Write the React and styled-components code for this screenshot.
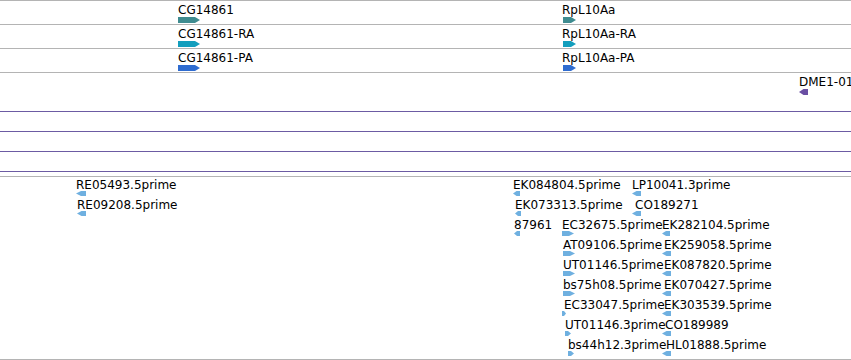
import React from 'react';
import styled, {createGlobalStyle} from 'styled-components';

const GlobalStyle = createGlobalStyle`
  html, body {
    margin: 0;
    padding: 0;
    background: #ffffff;
  }
  body {
    font-family: "DejaVu Sans", "Liberation Sans", sans-serif;
  }
`

const Browser = styled.div`
  width: 851px;
  height: 360px;
  overflow: hidden;
  display: flex;
  flex-direction: column;
  background: #fff;
  border-top: 1px solid #b4b4b4;
  box-sizing: border-box;
`

const Track = styled.div`
  position: relative;
  flex: none;
  height: ${p => p.h}px;
  border-bottom: 1px solid ${p => p.line || '#b4b4b4'};
`

const Feature = styled.div`
  position: absolute;
  left: ${p => p.x}px;
  top: ${p => p.y}px;
  display: flex;
  flex-direction: column;
  align-items: flex-start;
`

const Label = styled.span`
  font-size: 12px;
  line-height: 14px;
  color: #000;
  white-space: nowrap;
`

const Glyph = styled.svg`
  display: block;
  margin-top: ${p => p.gap || 0}px;
  margin-left: ${p => p.dx || 0}px;
`

const Arrow = ({w, h = 6, dir = 'right', color, gap, dx}) => {
  const tip = Math.min(5, w / 2)
  const pts = dir === 'right'
    ? `0,0 ${w - tip},0 ${w},${h / 2} ${w - tip},${h} 0,${h}`
    : `${w},0 ${tip},0 0,${h / 2} ${tip},${h} ${w},${h}`
  return (
    <Glyph width={w} height={h} gap={gap} dx={dx}>
      <polygon points={pts} fill={color} />
    </Glyph>
  )
}

const genes = [
  {row: 0, color: '#3f8c90'},
  {row: 1, color: '#139ebd', suffix: '-RA'},
  {row: 2, color: '#2f6cd0', suffix: '-PA'},
]

const EST = '#6fb0e0'

const ests = [
  {x: 76, r: 0, label: 'RE05493.5prime', w: 10, dir: 'left'},
  {x: 513, r: 0, label: 'EK084804.5prime', w: 7, dir: 'left'},
  {x: 632, r: 0, label: 'LP10041.3prime', w: 9, dir: 'left'},
  {x: 77, r: 1, label: 'RE09208.5prime', w: 9, dir: 'left'},
  {x: 515, r: 1, label: 'EK073313.5prime', w: 6, dir: 'left'},
  {x: 635, r: 1, label: 'CO189271', w: 9, dir: 'left', dx: -3},
  {x: 514, r: 2, label: '87961', w: 6, dir: 'left'},
  {x: 562, r: 2, label: 'EC32675.5prime', w: 12, dir: 'right'},
  {x: 662, r: 2, label: 'EK282104.5prime', w: 8, dir: 'left'},
  {x: 563, r: 3, label: 'AT09106.5prime', w: 12, dir: 'right'},
  {x: 664, r: 3, label: 'EK259058.5prime', w: 9, dir: 'left', dx: -2},
  {x: 563, r: 4, label: 'UT01146.5prime', w: 12, dir: 'right'},
  {x: 664, r: 4, label: 'EK087820.5prime', w: 9, dir: 'left', dx: -2},
  {x: 563, r: 5, label: 'bs75h08.5prime', w: 12, dir: 'right'},
  {x: 664, r: 5, label: 'EK070427.5prime', w: 9, dir: 'left', dx: -2},
  {x: 564, r: 6, label: 'EC33047.5prime', w: 4, dir: 'right', dx: -2},
  {x: 664, r: 6, label: 'EK303539.5prime', w: 9, dir: 'left', dx: -2},
  {x: 565, r: 7, label: 'UT01146.3prime', w: 6, dir: 'right'},
  {x: 665, r: 7, label: 'CO189989', w: 9, dir: 'left', dx: -3},
  {x: 568, r: 8, label: 'bs44h12.3prime', w: 6, dir: 'right'},
  {x: 666, r: 8, label: 'HL01888.5prime', w: 9, dir: 'left', dx: -4},
]

const App = () => {
  return (
    <>
      <GlobalStyle />
      <Browser>
        {genes.map(g => (
          <Track key={g.row} h={23}>
            <Feature x={178} y={2}>
              <Label>{'CG14861' + (g.suffix || '')}</Label>
              <Arrow w={22} color={g.color} gap={0} />
            </Feature>
            <Feature x={562} y={2}>
              <Label>{'RpL10Aa' + (g.suffix || '')}</Label>
              <Arrow w={13} color={g.color} gap={0} dx={1} />
            </Feature>
          </Track>
        ))}
        <Track h={38} line="#6c5ba3">
          <Feature x={799} y={2}>
            <Label>DME1-01</Label>
            <Arrow w={9} color="#6a4fa3" dir="left" gap={0} />
          </Feature>
        </Track>
        <Track h={19} line="#6c5ba3" />
        <Track h={19} line="#6c5ba3" />
        <Track h={19} line="#6c5ba3" />
        <Track h={4} />
        <Track h={182}>
          {ests.map(e => (
            <Feature key={e.label + e.r} x={e.x} y={e.r * 20 + 1}>
              <Label>{e.label}</Label>
              <Arrow w={e.w} h={5} color={EST} dir={e.dir} gap={-1} dx={e.dx} />
            </Feature>
          ))}
        </Track>
      </Browser>
    </>
  )
}

export default App
